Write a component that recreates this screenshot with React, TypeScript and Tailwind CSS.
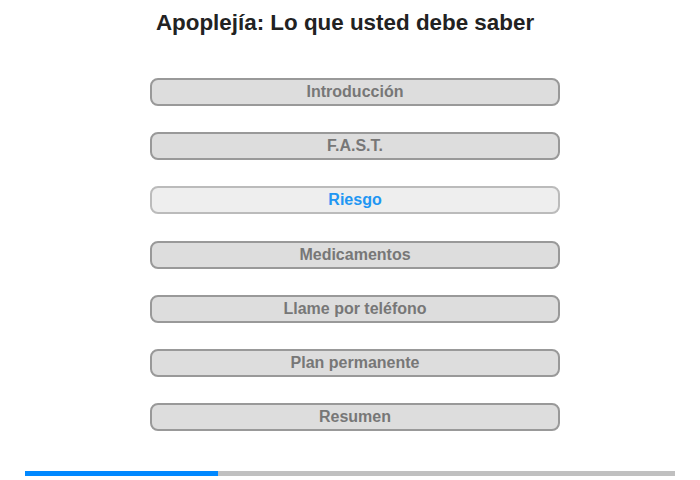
import React from 'react';

const sections = [
  'Introducción',
  'F.A.S.T.',
  'Riesgo',
  'Medicamentos',
  'Llame por teléfono',
  'Plan permanente',
  'Resumen',
];

export default function App() {
  const active = 'Riesgo';
  const progress = 29.7;

  return (
    <div className="w-[700px] h-[480px] bg-white font-['Liberation_Sans',Arial,sans-serif] flex flex-col">
      {/* Title */}
      <h1 className="w-[690px] pt-[10px] text-center text-[22.4px] leading-[25px] font-bold text-[#222]">
        Apoplejía: Lo que usted debe saber
      </h1>

      {/* Section menu */}
      <nav className="mt-[43px] ml-[150px] w-[410px] flex flex-col gap-[26.2px]">
        {sections.map((label) => {
          const isActive = label === active;
          return (
            <button
              key={label}
              className={`h-[28px] w-full rounded-[8px] border-2 text-[16px] leading-[18px] font-bold ${
                isActive
                  ? 'bg-[#eeeeee] border-[#bbbbbb] text-[#2196f3]'
                  : 'bg-[#dddddd] border-[#999999] text-[#777777]'
              }`}
            >
              {label}
            </button>
          );
        })}
      </nav>

      {/* Progress bar */}
      <div className="mt-auto mb-[4px] mx-[25px] h-[5px] bg-[#c0c0c0]">
        <div className="h-full bg-[#0088ff]" style={{ width: `${progress}%` }} />
      </div>
    </div>
  );
}
